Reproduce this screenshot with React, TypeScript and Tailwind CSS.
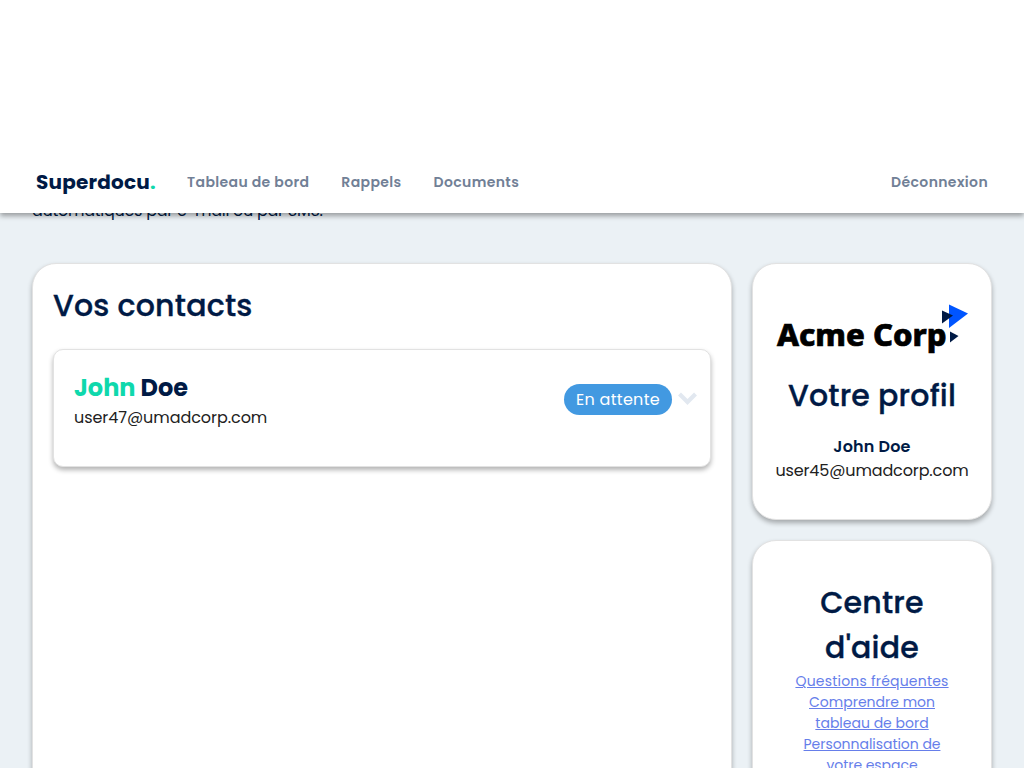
import { ReactNode } from "react";

function Card({ className, children }: { className: string; children?: ReactNode }) {
  return (
    <section
      className={`border border-[#e2e2e2] bg-white shadow-[0_3px_5px_rgba(0,0,0,0.3)] ${className}`}
    >
      {children}
    </section>
  );
}

function Title({ children }: { children: ReactNode }) {
  return (
    <h2 className="text-[30px] leading-[45px] font-medium tracking-[0.200px] text-[#001a45] [-webkit-text-stroke:0.350px_#001a45]">
      {children}
    </h2>
  );
}

function AcmeLogo() {
  return (
    <svg width="192" height="52" viewBox="0 0 192 52" className="block" role="img" aria-label="Acme Corp">
      <text
        x="1"
        y="42"
        fontSize="30.500"
        fontWeight="800"
        fontFamily="'Noto Sans', 'Open Sans', sans-serif"
        textLength="169.500"
        lengthAdjust="spacingAndGlyphs"
        fill="#000"
        stroke="#000"
        strokeWidth="0.700"
      >
        Acme Corp
      </text>
      <path d="M173 0.500L192 9.500L173 24Z" fill="#0055ff" />
      <path d="M166 6.500L177 11.500L166 19.500Z" fill="#001a45" />
      <path d="M174 27.500L182.500 32L174 38.500Z" fill="#001a45" />
    </svg>
  );
}

const nav = ["Tableau de bord", "Rappels", "Documents"];

export default function App() {
  return (
    <div className="flex h-[768px] flex-col overflow-hidden bg-[#ebf1f5] font-['Poppins','Inter',sans-serif] text-base text-[#212121]">
      <header className="relative z-10 flex h-[213px] shrink-0 flex-col justify-end bg-white shadow-[0_3px_5px_rgba(0,0,0,0.35)]">
        <nav className="flex h-[62px] items-center pr-9 pl-9">
          <a className="mr-[31.300px] text-xl font-bold tracking-[0.200px] text-[#001a45]">
            Superdocu<span className="text-[#0fd8ac]">.</span>
          </a>
          <div className="flex flex-1 gap-8 text-sm font-semibold tracking-[0.370px] text-[#718096]">
            {nav.map((label) => (
              <a key={label}>{label}</a>
            ))}
            <a className="ml-auto">Déconnexion</a>
          </div>
        </nav>
      </header>

      <p className="mx-8 -mt-[14px] h-6 shrink-0 leading-6 tracking-[-0.280px] text-[#001a45]">
        automatiques par e-mail ou par SMS.
      </p>

      <main className="mx-8 mt-10 flex shrink-0 items-start gap-5">
        <Card className="h-[640px] w-[700px] rounded-3xl px-5 pt-[19px]">
          <Title>Vos contacts</Title>
          <Card className="mt-[21px] flex h-[118px] justify-between rounded-[10px] py-5 pr-3 pl-5">
            <div>
              <h3 className="text-2xl leading-9 font-bold text-[#001a45]">
                <span className="text-[#0fd8ac]">John</span> Doe
              </h3>
              <p className="leading-6 tracking-[-0.060px]">user47@umadcorp.com</p>
            </div>
            <div className="mt-[14px] flex h-[31px] items-center">
              <span className="flex h-[31px] items-center rounded-full bg-[#4299e1] px-3 tracking-[0.300px] text-white">
                En attente
              </span>
              <svg width="20" height="20" viewBox="0 0 20 20" className="ml-[6px]">
                <path d="M1.500 4L9.500 12L17.500 4" fill="none" stroke="#e2e8f0" strokeWidth="4.200" />
              </svg>
            </div>
          </Card>
        </Card>

        <aside className="flex w-[240px] flex-col gap-5">
          <Card className="h-[257px] rounded-3xl px-5 pt-10 text-center">
            <div className="flex h-[69px] justify-center">
              <AcmeLogo />
            </div>
            <Title>Votre profil</Title>
            <p className="mt-[17px] leading-6 font-semibold tracking-[0.180px] text-[#001a45]">John Doe</p>
            <p className="leading-6 tracking-[-0.130px]">user45@umadcorp.com</p>
          </Card>
          <Card className="h-[400px] rounded-3xl px-10 pt-[39px] text-center">
            <Title>Centre d'aide</Title>
            <div className="mt-px flex flex-col text-sm leading-[21px] text-[#667eea]">
              <a className="tracking-[0.200px] underline">Questions fréquentes</a>
              <a className="underline">Comprendre mon tableau de bord</a>
              <a className="tracking-[-0.040px] underline">Personnalisation de votre espace</a>
            </div>
          </Card>
        </aside>
      </main>
    </div>
  );
}
